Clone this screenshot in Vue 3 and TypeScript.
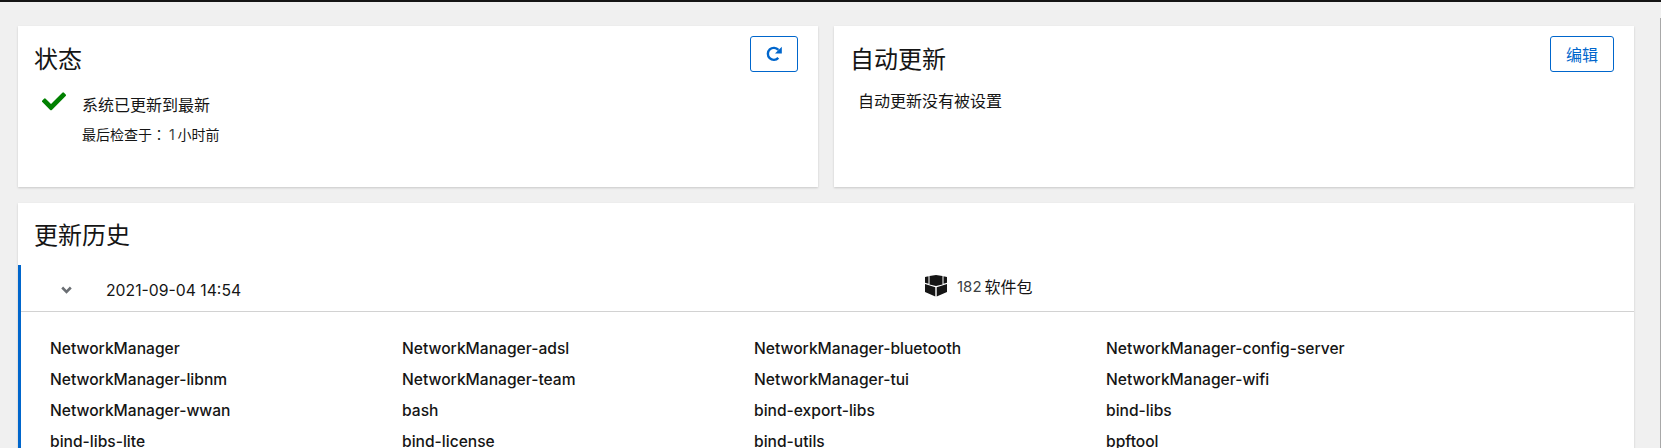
<script setup lang="ts">
const packages: string[] = [
  'NetworkManager',
  'NetworkManager-adsl',
  'NetworkManager-bluetooth',
  'NetworkManager-config-server',
  'NetworkManager-libnm',
  'NetworkManager-team',
  'NetworkManager-tui',
  'NetworkManager-wifi',
  'NetworkManager-wwan',
  'bash',
  'bind-export-libs',
  'bind-libs',
  'bind-libs-lite',
  'bind-license',
  'bind-utils',
  'bpftool',
]
</script>

<template>
  <div class="page">
    <div class="cards">
      <section class="card">
        <h2 class="card__title">状态</h2>
        <button class="btn btn--icon" aria-label="刷新">
          <svg width="16" height="16" viewBox="0 0 16 16">
            <path d="M12.300 11.900A6 6 0 1 1 12.400 3.900" fill="none" stroke="currentColor" stroke-width="2.400" />
            <path d="M15.800 .8V7.600H9z" fill="currentColor" />
          </svg>
        </button>
        <div class="status">
          <svg class="status__icon" width="24" height="19" viewBox="0 0 512 400" fill="#008000">
            <path d="M174 380 7 213a26 26 0 0 1 0-36l36-36a26 26 0 0 1 36 0l113 112L433 12a26 26 0 0 1 36 0l36 36a26 26 0 0 1 0 36L210 380a26 26 0 0 1-36 0z" />
          </svg>
          <div>
            <div class="status__text">系统已更新到最新</div>
            <div class="status__sub">最后检查于<span class="colon">：</span> <span class="num">1</span> 小时前</div>
          </div>
        </div>
      </section>

      <section class="card">
        <h2 class="card__title">自动更新</h2>
        <button class="btn btn--text">编辑</button>
        <div class="auto-text">自动更新没有被设置</div>
      </section>
    </div>

    <section class="card card--history">
      <h2 class="card__title">更新历史</h2>
      <div class="entry">
        <div class="entry__head">
          <svg class="entry__chevron" width="11" height="8" viewBox="0 0 11 8">
            <path d="M1.200 1.500 5.500 5.800 9.800 1.500" fill="none" stroke="#6a6e73" stroke-width="2.600" />
          </svg>
          <span class="entry__date">2021-09-04 14:54</span>
          <span class="entry__count">
            <svg width="22" height="22" viewBox="0 0 22 22" fill="#151515">
              <path d="M4.500 1 11 0l6.500 1v8.500L11 11 4.500 9.500zM0 2l3.500-.8v7.600L0 7.800zM22 2l-3.500-.8v7.600l3.500-1zM0 9l10.300 3.300v9.200L0 17zM22 9l-10.300 3.300v9.200L22 17z" />
            </svg>
            <span class="num">182</span>
            <span>软件包</span>
          </span>
        </div>
        <div class="entry__body">
          <div v-for="name in packages" :key="name" class="pkg">{{ name }}</div>
        </div>
      </div>
    </section>
    <div class="scroll-line"></div>
  </div>
</template>

<style>
html, body {
  margin: 0;
  overflow: hidden;
}
</style>

<style scoped>
.page {
  position: relative;
  box-sizing: border-box;
  height: 448px;
  overflow: hidden;
  padding: 24px 27px 0 18px;
  background: #f0f0f0;
  border-top: 2px solid #151515;
  color: #151515;
  font-family: "Inter", "Noto Sans CJK SC", sans-serif;
}
.scroll-line {
  position: absolute;
  top: 16px;
  right: 0;
  bottom: 0;
  width: 1px;
  background: #a8a8a8;
}
.cards {
  display: grid;
  grid-template-columns: 1fr 1fr;
  gap: 16px;
}
.card {
  position: relative;
  background: #fff;
  box-shadow: 0 1px 2px rgba(3, 3, 3, 0.16);
  height: 161px;
  box-sizing: border-box;
}
.card--history {
  margin-top: 16px;
  height: 300px;
}
.card__title {
  margin: 0;
  padding: 18px 16px 0;
  font-size: 24px;
  font-weight: 400;
  line-height: 32px;
}
.card--history .card__title {
  padding-top: 17px;
}
.btn {
  position: absolute;
  top: 10px;
  right: 20px;
  box-sizing: border-box;
  height: 36px;
  border: 1px solid #06c;
  border-radius: 3px;
  background: #fff;
  color: #06c;
  font: inherit;
  font-size: 16px;
  padding: 0;
}
.btn--icon {
  width: 48px;
}
.btn--icon svg {
  display: block;
  margin: 0 auto;
}
.btn--text {
  width: 64px;
}
.status {
  display: flex;
  padding: 17px 0 0 24px;
}
.status__icon {
  margin-top: -1px;
  margin-right: 16px;
}
.status__text {
  font-size: 16px;
  line-height: 24px;
}
.status__sub {
  margin-top: 7px;
  font-size: 14px;
  line-height: 21px;
  word-spacing: -1px;
}
.colon {
  font-family: "Noto Sans CJK TC", sans-serif;
}
.num {
  color: #3c3f42;
}
.auto-text {
  padding: 13px 0 0 24px;
  font-size: 16px;
  line-height: 24px;
}
.entry {
  margin-top: 13px;
  border-left: 3px solid #06c;
}
.entry__head {
  display: flex;
  align-items: center;
  box-sizing: border-box;
  height: 47px;
  padding-top: 4px;
  border-bottom: 1px solid #d2d2d2;
  font-size: 16px;
}
.entry__chevron {
  margin-left: 40px;
}
.entry__date {
  margin-left: 34px;
  width: 300px;
  font-size: 15.75px;
}
.entry__count {
  display: flex;
  align-items: center;
  gap: 3px;
  margin-left: 519px;
  margin-top: -8px;
}
.entry__count svg {
  margin-right: 7px;
}
.entry__count .num {
  font-size: 15px;
}
.entry__body {
  display: grid;
  grid-template-columns: repeat(4, 352px);
  grid-auto-rows: 31px;
  padding: 21px 0 0 29px;
}
.pkg {
  font-size: 15.6px;
  font-weight: 500;
  line-height: 31px;
  white-space: nowrap;
}
</style>
